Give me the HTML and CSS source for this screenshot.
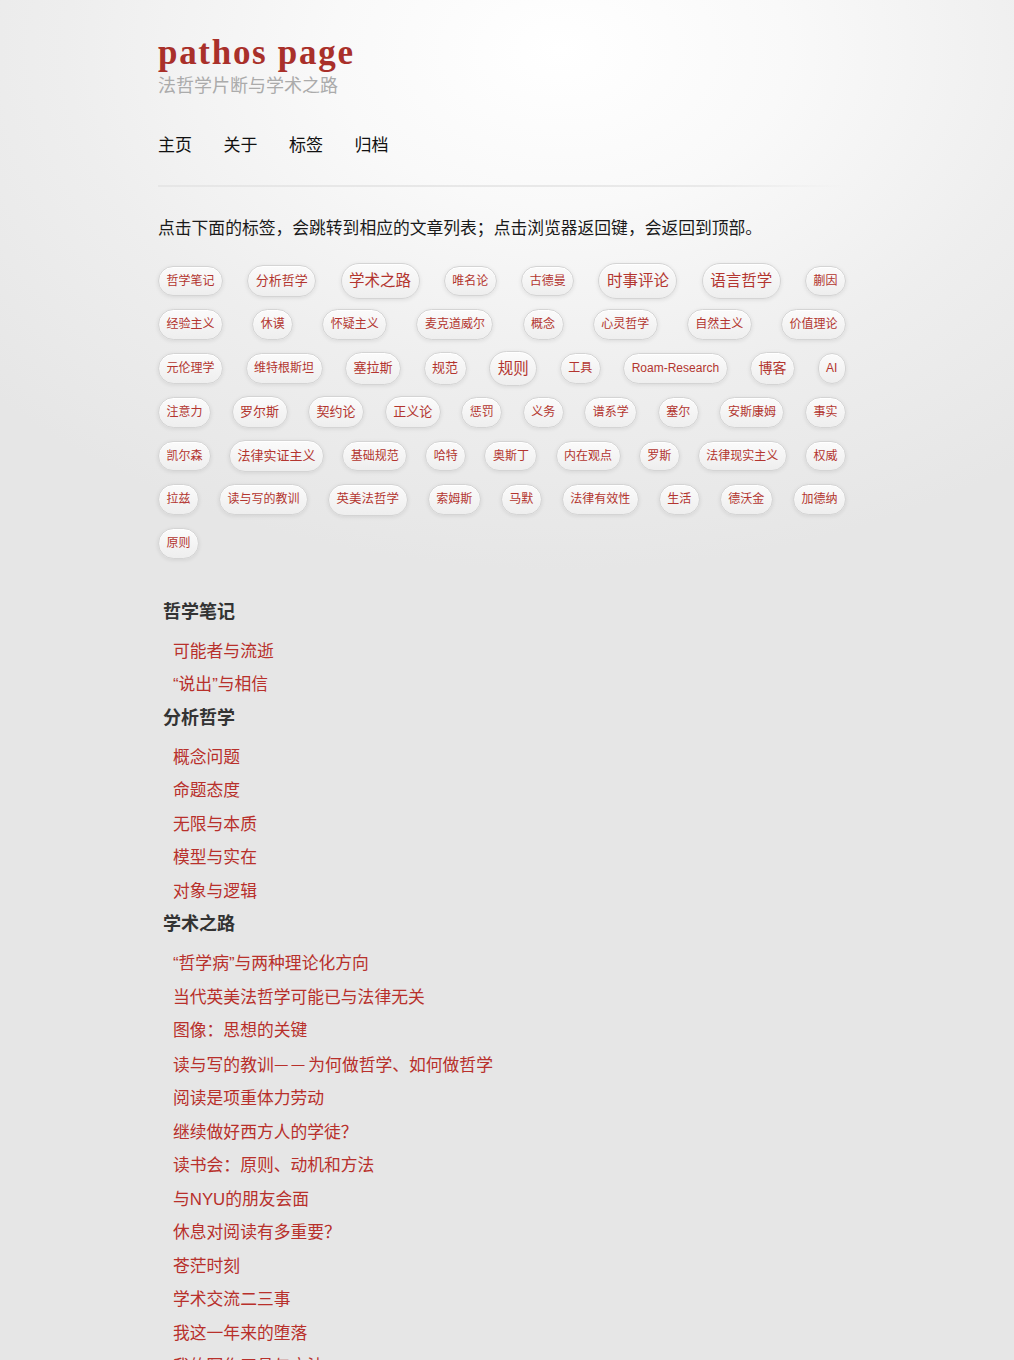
FILE: index.html
```html
<!DOCTYPE html>
<html lang="zh-CN">
<head>
<meta charset="utf-8">
<title>标签 | pathos page</title>
<link rel="stylesheet" href="styles.css">
</head>
<body>
<div class="page">
  <header class="site-header">
    <h1 class="site-title">pathos page</h1>
    <p class="site-desc">法哲学片断与学术之路</p>
    <nav class="site-nav">
      <a href="#">主页</a>
      <a href="#">关于</a>
      <a href="#">标签</a>
      <a href="#">归档</a>
    </nav>
  </header>
  <hr class="divider">
  <main class="content">
    <p class="intro">点击下面的标签，会跳转到相应的文章列表；点击浏览器返回键，会返回到顶部。</p>
    <ul class="tag-cloud">
      <li><a class="tag s12" href="#">哲学笔记</a></li>
      <li><a class="tag s13" href="#">分析哲学</a></li>
      <li><a class="tag s15" href="#">学术之路</a></li>
      <li><a class="tag s12" href="#">唯名论</a></li>
      <li><a class="tag s12" href="#">古德曼</a></li>
      <li><a class="tag s15" href="#">时事评论</a></li>
      <li><a class="tag s15" href="#">语言哲学</a></li>
      <li><a class="tag s12" href="#">蒯因</a></li>
      <li><a class="tag s12" href="#">经验主义</a></li>
      <li><a class="tag s12" href="#">休谟</a></li>
      <li><a class="tag s12" href="#">怀疑主义</a></li>
      <li><a class="tag s12" href="#">麦克道威尔</a></li>
      <li><a class="tag s12" href="#">概念</a></li>
      <li><a class="tag s12" href="#">心灵哲学</a></li>
      <li><a class="tag s12" href="#">自然主义</a></li>
      <li><a class="tag s12" href="#">价值理论</a></li>
      <li><a class="tag s12" href="#">元伦理学</a></li>
      <li><a class="tag s12" href="#">维特根斯坦</a></li>
      <li><a class="tag s13" href="#">塞拉斯</a></li>
      <li><a class="tag s13" href="#">规范</a></li>
      <li><a class="tag s15" href="#">规则</a></li>
      <li><a class="tag s12" href="#">工具</a></li>
      <li><a class="tag s12" href="#">Roam-Research</a></li>
      <li><a class="tag s14" href="#">博客</a></li>
      <li><a class="tag s12" href="#">AI</a></li>
      <li><a class="tag s12" href="#">注意力</a></li>
      <li><a class="tag s13" href="#">罗尔斯</a></li>
      <li><a class="tag s13" href="#">契约论</a></li>
      <li><a class="tag s13" href="#">正义论</a></li>
      <li><a class="tag s12" href="#">惩罚</a></li>
      <li><a class="tag s12" href="#">义务</a></li>
      <li><a class="tag s12" href="#">谱系学</a></li>
      <li><a class="tag s12" href="#">塞尔</a></li>
      <li><a class="tag s12" href="#">安斯康姆</a></li>
      <li><a class="tag s12" href="#">事实</a></li>
      <li><a class="tag s12" href="#">凯尔森</a></li>
      <li><a class="tag s13" href="#">法律实证主义</a></li>
      <li><a class="tag s12" href="#">基础规范</a></li>
      <li><a class="tag s12" href="#">哈特</a></li>
      <li><a class="tag s12" href="#">奥斯丁</a></li>
      <li><a class="tag s12" href="#">内在观点</a></li>
      <li><a class="tag s12" href="#">罗斯</a></li>
      <li><a class="tag s12" href="#">法律现实主义</a></li>
      <li><a class="tag s12" href="#">权威</a></li>
      <li><a class="tag s12" href="#">拉兹</a></li>
      <li><a class="tag s12" href="#">读与写的教训</a></li>
      <li><a class="tag s125" href="#">英美法哲学</a></li>
      <li><a class="tag s12" href="#">索姆斯</a></li>
      <li><a class="tag s12" href="#">马默</a></li>
      <li><a class="tag s12" href="#">法律有效性</a></li>
      <li><a class="tag s12" href="#">生活</a></li>
      <li><a class="tag s12" href="#">德沃金</a></li>
      <li><a class="tag s12" href="#">加德纳</a></li>
      <li><a class="tag s12" href="#">原则</a></li>
    </ul>

    <section class="tag-section">
      <h2 class="tag-title">哲学笔记</h2>
      <ul class="posts">
        <li><a href="#">可能者与流逝</a></li>
        <li><a href="#">“说出”与相信</a></li>
      </ul>
    </section>
    <section class="tag-section">
      <h2 class="tag-title">分析哲学</h2>
      <ul class="posts">
        <li><a href="#">概念问题</a></li>
        <li><a href="#">命题态度</a></li>
        <li><a href="#">无限与本质</a></li>
        <li><a href="#">模型与实在</a></li>
        <li><a href="#">对象与逻辑</a></li>
      </ul>
    </section>
    <section class="tag-section">
      <h2 class="tag-title">学术之路</h2>
      <ul class="posts">
        <li><a href="#">“哲学病”与两种理论化方向</a></li>
        <li><a href="#">当代英美法哲学可能已与法律无关</a></li>
        <li><a href="#">图像：思想的关键</a></li>
        <li><a href="#">读与写的教训<span class="dash">——</span>为何做哲学、如何做哲学</a></li>
        <li><a href="#">阅读是项重体力劳动</a></li>
        <li><a href="#">继续做好西方人的学徒？</a></li>
        <li><a href="#">读书会：原则、动机和方法</a></li>
        <li><a href="#">与NYU的朋友会面</a></li>
        <li><a href="#">休息对阅读有多重要？</a></li>
        <li><a href="#">苍茫时刻</a></li>
        <li><a href="#">学术交流二三事</a></li>
        <li><a href="#">我这一年来的堕落</a></li>
        <li><a href="#">我的写作工具与方法</a></li>
      </ul>
    </section>
  </main>
</div>
</body>
</html>
```
FILE: styles.css
```css
html {
  background-color: #e5e5e5;
  background-image: radial-gradient(ellipse 760px 520px at 560px 50px, #ffffff 0%, #f9f9f9 30%, #eeeeee 65%, #e6e6e6 100%);
  background-repeat: no-repeat;
}

body {
  margin: 0;
  font-family: "Liberation Sans", "Noto Sans CJK SC", sans-serif;
  color: #222;
}

a {
  text-decoration: none;
}

.page {
  box-sizing: border-box;
  width: 698px;
  padding-right: 10px;
  margin: 0 auto;
}

.site-header {
  padding-top: 33px;
}

.site-title {
  margin: 0;
  font-family: "Liberation Serif", "DejaVu Serif", serif;
  font-weight: bold;
  font-size: 35px;
  line-height: 40px;
  letter-spacing: 1.7px;
  color: #a9302a;
}

.site-desc {
  margin: 2px 0 0;
  font-size: 18px;
  line-height: 22px;
  color: #ababab;
}

.site-nav {
  margin-top: 37px;
  display: flex;
  gap: 31.5px;
  font-size: 17px;
  line-height: 24px;
}

.site-nav a {
  color: #111;
}

.divider {
  margin: 27px 0 0;
  height: 2px;
  border: 0;
  background: linear-gradient(to right, #e6e6e6 0%, #e9e9e9 80%, rgba(233, 233, 233, 0) 100%);
}

.intro {
  margin: 30px 0 0;
  font-size: 16.8px;
  line-height: 24px;
  color: #1a1a1a;
}

.tag-cloud {
  list-style: none;
  margin: 18px 0 0;
  padding: 0;
  display: flex;
  flex-wrap: wrap;
  justify-content: space-between;
  column-gap: 17.75px;
}

.tag-cloud li {
  height: 43.8px;
  display: flex;
  align-items: center;
}

.tag {
  display: block;
  padding: 6px 7.5px;
  line-height: 1.4;
  border: 1px solid #d4d4d4;
  border-radius: 20px;
  background: linear-gradient(#fbfbfb, #eeeeee);
  box-shadow: 0 1px 4px rgba(0, 0, 0, 0.09), inset 0 1px 0 #ffffff;
  color: #b3352f;
  white-space: nowrap;
}

.s12 { font-size: 12px; }
.s125 { font-size: 12.5px; }
.s13 { font-size: 13px; }
.s14 { font-size: 14px; }
.s15 { font-size: 15.5px; }

.tag-section:first-of-type {
  margin-top: 31px;
}

.tag-title {
  margin: 0;
  padding-left: 5px;
  font-size: 18px;
  line-height: 30px;
  font-weight: bold;
  color: #333;
}

.posts {
  list-style: none;
  margin: 8px 0 1px;
  padding: 0 0 0 15px;
  font-size: 16.8px;
  line-height: 33.5px;
}

.posts a {
  color: #b8302b;
}

.dash {
  font-size: 13px;
  letter-spacing: 3.8px;
  margin-left: 1px;
  vertical-align: 2px;
}
```
